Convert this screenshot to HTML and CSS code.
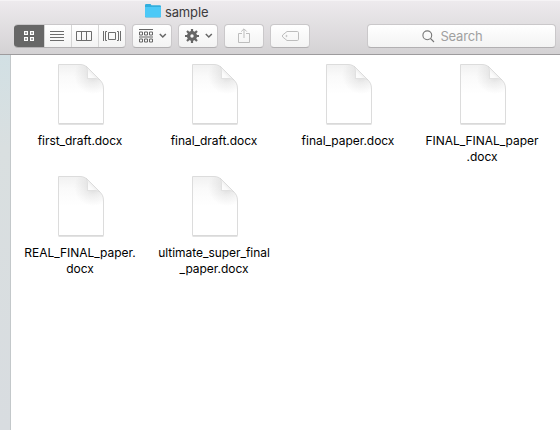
FILE: index.html
```
<!DOCTYPE html>
<html lang="en">
<head>
<meta charset="utf-8">
<title>sample</title>
<link rel="stylesheet" href="styles.css">
</head>
<body>
<svg class="defs" width="0" height="0" aria-hidden="true">
  <defs>
    <linearGradient id="fold" x1="0" y1="1" x2="1" y2="0"><stop offset="0" stop-color="#fff"/><stop offset=".35" stop-color="#fafafa"/><stop offset=".6" stop-color="#e6e6e6"/></linearGradient>
    <linearGradient id="paper" x1="0" y1="0" x2="0" y2="1"><stop offset="0" stop-color="#f1f1f1"/><stop offset=".2" stop-color="#fafafa"/><stop offset=".5" stop-color="#fff"/></linearGradient>
    <radialGradient id="shade" gradientUnits="userSpaceOnUse" cx="37" cy="13" r="19"><stop offset="0" stop-color="#000" stop-opacity=".14"/><stop offset=".4" stop-color="#000" stop-opacity=".06"/><stop offset="1" stop-color="#000" stop-opacity="0"/></radialGradient>
    <symbol id="doc" viewBox="0 0 50 64">
      <path d="M2.500 2.500H24C28 2.500 30 4 33 7L43 17C46 20 47.500 22 47.500 27V61.500H2.500Z" fill="url(#paper)"/>
      <path d="M2.500 2.500H24C28 2.500 30 4 33 7L43 17C46 20 47.500 22 47.500 27V61.500H2.500Z" fill="url(#shade)" stroke="#dcdcdc"/>
      <path d="M2.500 62.300H47.500" stroke="#d2d2d2" stroke-width=".8"/>
      <path d="M30 4C31.300 6 31.500 8 31.500 10V16.500H38C41 16.500 43 17 44 18L33 7Z" fill="url(#fold)" stroke="#d6d6d6" stroke-width=".6"/>
    </symbol>
  </defs>
</svg>
<div class="window">
  <header class="toolbar">
    <div class="title">
      <svg width="16" height="14" viewBox="0 0 16 14"><path d="M0 1.300Q0 0 1.200 0H5.200Q6 0 6.400 1.300H14.800Q16 1.300 16 2.500V12.500Q16 13.500 15 13.500H1Q0 13.500 0 12.500Z" fill="#32aedd"/><path d="M0 3H16V12.200Q16 13 15 13H1Q0 13 0 12.200Z" fill="#4cc9f7"/></svg>
      <span>sample</span>
    </div>
    <div class="controls">
      <div class="segments">
        <div class="segment active"><svg width="12" height="12" viewBox="0 0 12 12" fill="none" stroke="#fff" stroke-width="1.200"><path d="M1.600 1.600h2.800v2.800H1.600zM7.600 1.600h2.800v2.800H7.600zM1.600 7.600h2.800v2.800H1.600zM7.600 7.600h2.800v2.800H7.600z"/></svg></div>
        <div class="segment"><svg width="14" height="11" viewBox="0 0 14 11" stroke="#6c6c6c"><path d="M0 .5H14M0 3.500H14M0 6.500H14M0 9.500H14"/></svg></div>
        <div class="segment"><svg width="16" height="11" viewBox="0 0 16 11" fill="none" stroke="#6c6c6c"><path d="M.5 .5H15.500V9.500H.5ZM5.500 .5V9.500M10.500 .5V9.500"/></svg></div>
        <div class="segment wide"><svg width="18" height="11" viewBox="0 0 18 11" fill="none" stroke="#6c6c6c"><path d="M5.500 1.500H12.500V8.500H5.500ZM.5 0V10M17.500 0V10M4 .5H2.500V9.500H4M14 .5H15.500V9.500H14"/></svg></div>
      </div>
      <div class="button"><svg width="29" height="14" viewBox="0 0 29 14" fill="none" stroke="#666"><path d="M1 .5H15M1 8H15"/><path d="M1.500 3h3v3h-3zM6.500 3h3v3h-3zM11.500 3h3v3h-3zM1.500 10h3v3h-3zM6.500 10h3v3h-3zM11.500 10h3v3h-3z"/><path d="M21.800 5L24.800 8L27.800 5" stroke-width="1.500"/></svg></div>
      <div class="button"><svg width="29" height="14" viewBox="0 0 29 14" fill="none"><circle cx="8" cy="7" r="3.400" stroke="#666" stroke-width="3.400"/><path d="M8 0V3M8 11V14M1 7H4M12 7H15M3 2L5.200 4.200M10.800 9.800L13 12M3 12L5.200 9.800M10.800 4.200L13 2" stroke="#666" stroke-width="2.200"/><path d="M21.800 5L24.800 8L27.800 5" stroke="#666" stroke-width="1.500"/></svg></div>
      <div class="button"><svg width="12" height="16" viewBox="0 0 12 16" fill="none" stroke="#bdbdbd"><path d="M4 5.500H.5V14.500H11.500V5.500H8M6 10V1M3.200 3.600L6 .8L8.800 3.600"/></svg></div>
      <div class="button"><svg width="17" height="11" viewBox="0 0 17 11" fill="none" stroke="#bdbdbd"><path d="M5 .5H15.300Q16.500 .5 16.500 1.700V8.300Q16.500 9.500 15.300 9.500H5L.7 6Q.1 5 .7 4Z"/><circle cx="4.500" cy="5" r=".6"/></svg></div>
      <div class="search"><svg width="13" height="13" viewBox="0 0 13 13" fill="none" stroke="#777" stroke-width="1.100"><circle cx="5.300" cy="5.300" r="4.400"/><path d="M8.500 8.500L12 12"/></svg><span>Search</span></div>
    </div>
  </header>
  <div class="body">
    <aside class="sidebar"></aside>
    <main class="files">
      <div class="file"><svg><use href="#doc"/></svg><span>first_draft.docx</span></div>
      <div class="file"><svg><use href="#doc"/></svg><span>final_draft.docx</span></div>
      <div class="file"><svg><use href="#doc"/></svg><span>final_paper.docx</span></div>
      <div class="file"><svg><use href="#doc"/></svg><span>FINAL_FINAL_paper<br>.docx</span></div>
      <div class="file"><svg><use href="#doc"/></svg><span>REAL_FINAL_paper.<br>docx</span></div>
      <div class="file"><svg><use href="#doc"/></svg><span>ultimate_super_final<br>_paper.docx</span></div>
    </main>
  </div>
</div>
</body>
</html>
```
FILE: styles.css
```
* { box-sizing: border-box; }
body { margin: 0; font-family: Inter, "Liberation Sans", sans-serif; background: #fff; }
svg { display: block; flex: none; }
.defs { position: absolute; }
.window { width: 560px; height: 430px; display: flex; flex-direction: column; overflow: hidden; }
.toolbar { height: 55px; flex: none; background: linear-gradient(#edeaed, #d4d2d4); border-top: 1px solid #f5f3f5; border-bottom: 1px solid #9d9b9d; }
.title { height: 23px; padding: 3px 0 0 145px; display: flex; align-items: flex-start; gap: 4px; font-size: 13px; line-height: 16px; color: #3d3b3d; }
.title span { letter-spacing: -.15px; }
.controls { display: flex; gap: 6px; padding-left: 14px; }
.segments, .button, .search { height: 24px; border: 1px solid #cac8ca; border-bottom-color: #b2b0b2; border-radius: 4px; background: linear-gradient(#fff, #f3f3f3); }
.segments { width: 112px; display: flex; overflow: hidden; border-left: 0; }
.segment { width: 27px; padding-right: 2px; border-left: 1px solid #d5d5d5; display: flex; align-items: center; justify-content: center; }
.segment.wide { padding-right: 0; }
.segment.active { width: 30px; padding: 0; background: #676767; border: 0; margin: -1px 0; }
.button { width: 40px; display: flex; align-items: center; justify-content: center; }
.search { width: 189px; margin-left: 51px; display: flex; align-items: center; justify-content: center; gap: 5px; padding-right: 18px; font-size: 13px; color: #a0a0a0; }
.search span { letter-spacing: -.15px; }
.body { flex: 1; display: flex; }
.sidebar { width: 11px; background: linear-gradient(#d2e0e4, #d9dfe0 25%, #d8dce0); border-right: 1px solid #c3c8ca; }
.files { flex: none; width: 540px; padding: 7px 0 0 3px; display: grid; grid-template-columns: repeat(4, 134px); grid-auto-rows: 112px; align-content: start; }
.file { display: flex; flex-direction: column; align-items: center; font-size: 12px; line-height: 16px; text-align: center; color: #000; white-space: nowrap; }
.file span { letter-spacing: -.04px; margin-left: -2px; }
.file svg { width: 50px; height: 64px; margin-bottom: 7px; }
```
